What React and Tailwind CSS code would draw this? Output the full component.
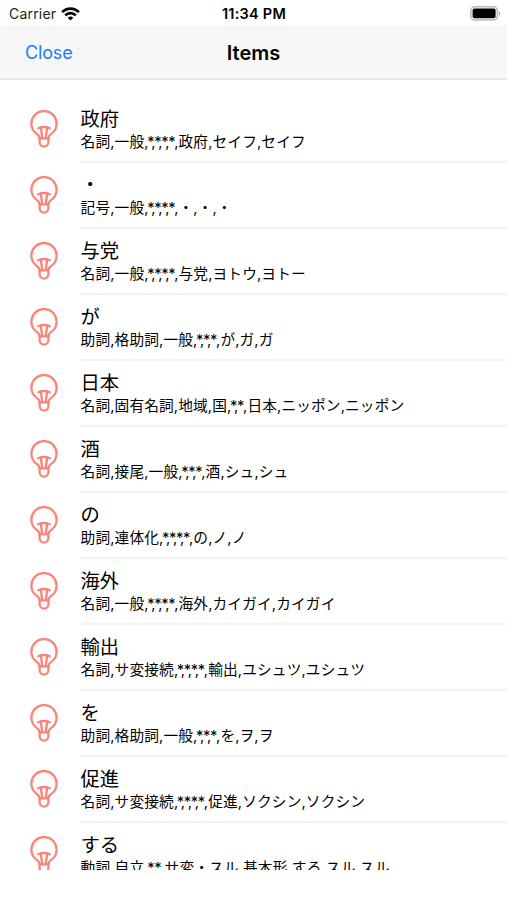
import React from 'react';

const items = [
  { surface: '政府', feature: '名詞,一般,*,*,*,*,政府,セイフ,セイフ' },
  { surface: '・', feature: '記号,一般,*,*,*,*,・,・,・' },
  { surface: '与党', feature: '名詞,一般,*,*,*,*,与党,ヨトウ,ヨトー' },
  { surface: 'が', feature: '助詞,格助詞,一般,*,*,*,が,ガ,ガ' },
  { surface: '日本', feature: '名詞,固有名詞,地域,国,*,*,日本,ニッポン,ニッポン' },
  { surface: '酒', feature: '名詞,接尾,一般,*,*,*,酒,シュ,シュ' },
  { surface: 'の', feature: '助詞,連体化,*,*,*,*,の,ノ,ノ' },
  { surface: '海外', feature: '名詞,一般,*,*,*,*,海外,カイガイ,カイガイ' },
  { surface: '輸出', feature: '名詞,サ変接続,*,*,*,*,輸出,ユシュツ,ユシュツ' },
  { surface: 'を', feature: '助詞,格助詞,一般,*,*,*,を,ヲ,ヲ' },
  { surface: '促進', feature: '名詞,サ変接続,*,*,*,*,促進,ソクシン,ソクシン' },
  { surface: 'する', feature: '動詞,自立,*,*,サ変・スル,基本形,する,スル,スル' },
];

function WifiIcon() {
  return (
    <svg className="ml-[5px] h-[14px] w-[19px]" viewBox="0 0 19 14" fill="none" stroke="#000" strokeWidth="2.6">
      <path d="M1.1 5.1a12 12 0 0 1 16.8 0" />
      <path d="M4.2 8.3a7.5 7.5 0 0 1 10.6 0" />
      <path d="M9.5 13.6 6.7 10.8a4 4 0 0 1 5.6 0z" fill="#000" stroke="none" />
    </svg>
  );
}

function BatteryIcon() {
  return (
    <svg className="h-[15px] w-[31px]" viewBox="0 0 31 15">
      <rect x="0.8" y="0.8" width="26.6" height="13.2" rx="4" fill="#fff" stroke="#b8b8b8" strokeWidth="1.6" />
      <rect x="2.6" y="2.6" width="23" height="9.6" rx="2" fill="#000" />
      <path d="M29 5.2c1.8.7 1.8 3.8 0 4.5z" fill="#a6a6a6" />
    </svg>
  );
}

function BulbIcon() {
  return (
    <svg
      className="h-[38px] w-[28px] shrink-0"
      viewBox="0 0 28 38"
      fill="none"
      stroke="#fa8577"
      strokeWidth="2.3"
      strokeLinejoin="round"
      strokeLinecap="round"
    >
      <path d="M9.6 28.4C9.6 25.4 8.2 24.9 6 23.4A12.6 12.6 0 1 1 22 23.4C19.8 24.9 18.4 25.4 18.4 28.4" />
      <path d="M8.2 18.2Q14 15.8 19.8 18.2" />
      <path d="M10.9 18 12.2 28M17.1 18 15.8 28" />
      <path d="M9.6 28.4h8.8v3.6a4.4 4.6 0 0 1-8.8 0z" />
    </svg>
  );
}

// runs of empty fields (",*,*,") are kerned tighter than the other text
function Feature({ text }) {
  return text.split(/((?:,\*)+)/).map((part, index) =>
    part.startsWith(',*') ? (
      <span key={index} className="tracking-[-1.3px]">{part}</span>
    ) : (
      <span key={index}>{part}</span>
    )
  );
}

export default function App() {
  return (
    <div className="h-[900px] w-[507px] overflow-hidden bg-white font-['Inter','Noto_Sans_CJK_JP',sans-serif] text-black">
      {/* Status bar */}
      <div className="grid h-[25px] grid-cols-3 items-center pt-[2px] pr-[6px] pl-[9px] text-[14px]">
        <div className="flex items-center text-[#222]">
          <span className="tracking-[0.2px]">Carrier</span>
          <WifiIcon />
        </div>
        <div className="pr-[2px] text-center text-[14.5px] font-semibold tracking-[0.25px] whitespace-nowrap">11:34 PM</div>
        <div className="flex justify-end">
          <BatteryIcon />
        </div>
      </div>

      {/* Navigation bar */}
      <div className="grid h-[55px] grid-cols-3 items-center border-b-2 border-[#e6e6e6] bg-[#f7f7f7]">
        <button className="pt-[2px] pl-[25px] text-left text-[18px] tracking-[-0.15px] text-[#187efa]">Close</button>
        <h1 className="pt-[2px] text-center text-[20px] font-semibold">Items</h1>
      </div>

      {/* Items */}
      <ul className="h-[790px] overflow-hidden pt-[17px]">
        {items.map((item) => (
          <li key={item.surface} className="flex h-[66px] pl-[30px]">
            <div className="pt-[13px]">
              <BulbIcon />
            </div>
            <div className="ml-[22px] flex-1 border-b-2 border-[#f3f3f3] pt-[9px] pl-[0.6px] whitespace-nowrap">
              <div className="text-[19.3px] leading-[26px]">{item.surface}</div>
              <div className="text-[14.7px] leading-[20px] tracking-[0.13px]">
                <Feature text={item.feature} />
              </div>
            </div>
          </li>
        ))}
      </ul>
    </div>
  );
}
